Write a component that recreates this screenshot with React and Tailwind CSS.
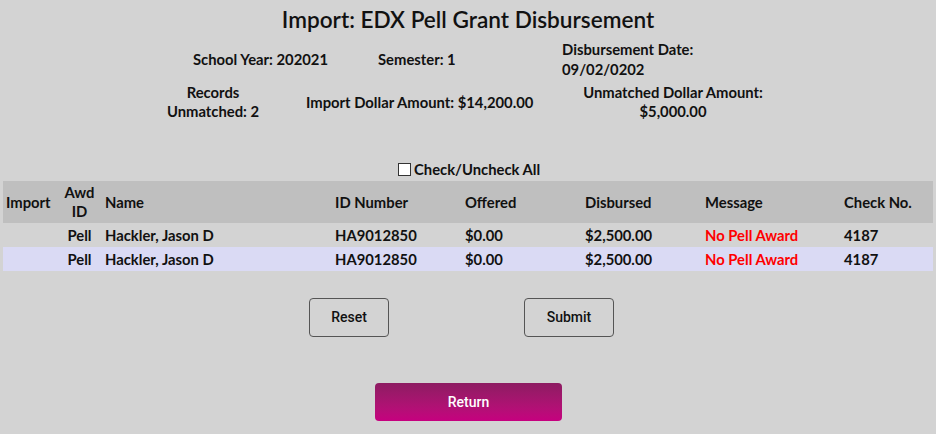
export default function App() {
  const rows = [
    { bg: "bg-[#d3d3d3]" },
    { bg: "bg-[#dadaf4]" },
  ];
  return (
    <div className="w-[936px] h-[434px] bg-[#d3d3d3] text-[#111] overflow-hidden" style={{ fontFamily: "Lato, 'Noto Sans', sans-serif" }}>
      <div className="pt-[5px] text-center text-[22.6px] leading-[30px] font-semibold text-[#111]">
        Import: EDX Pell Grant Disbursement
      </div>
      <div className="flex items-center mt-[4px] h-[40px] text-[14.8px] leading-[20px] font-bold">
        <div className="pl-[193px] w-[378px]">School Year: 202021</div>
        <div className="w-[184px]">Semester: 1</div>
        <div>
          <div>Disbursement Date:</div>
          <div>09/02/0202</div>
        </div>
      </div>
      <div className="flex items-center mt-[4px] h-[38px] text-[14.8px] leading-[19px] font-bold">
        <div className="ml-[150px] w-[126px] text-center">
          <div>Records</div>
          <div>Unmatched: 2</div>
        </div>
        <div className="ml-[30px] w-[240px] whitespace-nowrap">Import Dollar Amount: $14,200.00</div>
        <div className="ml-[26px] w-[202px] text-center whitespace-nowrap">
          <div>Unmatched Dollar Amount:</div>
          <div>$5,000.00</div>
        </div>
      </div>
      <div className="flex items-center mt-[37px] h-[22px] text-[14.8px] font-bold">
        <span className="ml-[398px] w-[13px] h-[13px] border border-[#333] bg-white mr-[3px]" />
        <span>Check/Uncheck All</span>
      </div>
      <div className="px-[3px] mt-[1px]">
        <table className="table-fixed border-collapse w-[930px] text-[14.8px] font-bold">
          <colgroup>
            <col className="w-[54px]" />
            <col className="w-[45px]" />
            <col className="w-[230px]" />
            <col className="w-[130px]" />
            <col className="w-[120px]" />
            <col className="w-[120px]" />
            <col className="w-[139px]" />
            <col className="w-[92px]" />
          </colgroup>
          <thead>
            <tr className="bg-[#bfbfbf] h-[42px] leading-[19px]">
              <th className="text-left font-bold pl-[3px]">Import</th>
              <th className="text-center font-bold">Awd<br />ID</th>
              <th className="text-left font-bold pl-[3px]">Name</th>
              <th className="text-left font-bold pl-[3px]">ID Number</th>
              <th className="text-left font-bold pl-[3px]">Offered</th>
              <th className="text-left font-bold pl-[3px]">Disbursed</th>
              <th className="text-left font-bold pl-[3px]">Message</th>
              <th className="text-left font-bold pl-[3px]">Check No.</th>
            </tr>
          </thead>
          <tbody>
            {rows.map((r, i) => (
              <tr key={i} className={`${r.bg} h-[24px] leading-[19px]`}>
                <td></td>
                <td className="text-center">Pell</td>
                <td className="pl-[3px]">Hackler, Jason D</td>
                <td className="pl-[3px]">HA9012850</td>
                <td className="pl-[3px]">$0.00</td>
                <td className="pl-[3px]">$2,500.00</td>
                <td className="pl-[3px] text-[#ff0000]">No Pell Award</td>
                <td className="pl-[3px]">4187</td>
              </tr>
            ))}
          </tbody>
        </table>
      </div>
      <div className="flex mt-[27px]" style={{ fontFamily: "Roboto, 'Liberation Sans', sans-serif" }}>
        <button className="ml-[309px] w-[80px] h-[39px] border border-[#555] rounded-[4px] text-[14px] font-medium text-[#111]">Reset</button>
        <button className="ml-[135px] w-[90px] h-[39px] border border-[#555] rounded-[4px] text-[14px] font-medium text-[#111]">Submit</button>
      </div>
      <div className="flex mt-[46px]" style={{ fontFamily: "Roboto, 'Liberation Sans', sans-serif" }}>
        <button className="ml-[375px] w-[187px] h-[38px] rounded-[4px] bg-gradient-to-b from-[#8d1b62] to-[#c6007f] text-white text-[14px] font-medium">Return</button>
      </div>
    </div>
  );
}
